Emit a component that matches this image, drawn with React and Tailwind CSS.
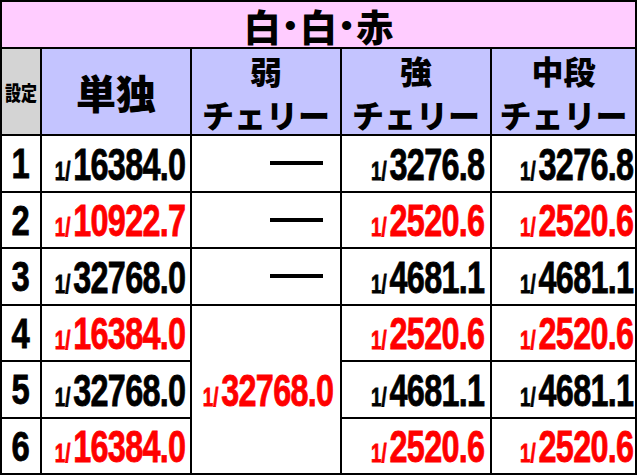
import React from "react";

const NUM_FONT = "font-['Liberation_Sans','Arial',sans-serif]";
const JP_FONT = "font-['Noto_Sans_CJK_JP','Noto_Sans',sans-serif]";

const rows = [
  { set: "1", single: ["16384.0", false], strong: ["3276.8", false], mid: ["3276.8", false] },
  { set: "2", single: ["10922.7", true], strong: ["2520.6", true], mid: ["2520.6", true] },
  { set: "3", single: ["32768.0", false], strong: ["4681.1", false], mid: ["4681.1", false] },
  { set: "4", single: ["16384.0", true], strong: ["2520.6", true], mid: ["2520.6", true] },
  { set: "5", single: ["32768.0", false], strong: ["4681.1", false], mid: ["4681.1", false] },
  { set: "6", single: ["16384.0", true], strong: ["2520.6", true], mid: ["2520.6", true] },
];

// "1/xxxx" — small prefix, large value, squeezed to a condensed look
function Value({ value, red }) {
  return (
    <div
      className={`flex items-baseline shrink-0 leading-none font-bold origin-right scale-x-[0.72] [-webkit-text-stroke:0.8px] ${NUM_FONT} ${red ? "text-[#ff0000]" : "text-black"}`}
    >
      <span className="text-[26px] mr-[4px]">1/</span>
      <span className="text-[45px] tracking-[-1px]">{value}</span>
    </div>
  );
}

function Prob({ value, red, pr = "pr-[5px]" }) {
  return (
    <div className={`bg-white flex items-center justify-end min-w-0 pt-[2px] ${pr}`}>
      <Value value={value} red={red} />
    </div>
  );
}

function Dash() {
  return (
    <div className="bg-white flex items-center justify-end pr-[17px]">
      <div className="w-[53px] h-[4px] bg-black" />
    </div>
  );
}

function Dot() {
  return <span className={`text-[32px] leading-none mx-[4px] -translate-y-[1px] ${NUM_FONT}`}>•</span>;
}

export default function App() {
  return (
    <div className="w-[640px] h-[475px] bg-white">
      <div className="w-[637px] h-[475px] bg-black p-[2px] grid gap-[2px] grid-cols-[38px_148px_148px_148px_1fr] grid-rows-[45px_85px_repeat(6,1fr)]">
        {/* title */}
        <div className={`col-span-5 bg-[#ffccff] flex items-center justify-center pt-[3px] text-[37px] font-black text-black leading-none ${JP_FONT}`}>
          白<Dot />白<Dot />赤
        </div>

        {/* header */}
        <div className={`bg-[#d4d4d4] flex items-center justify-center text-[16px] font-black leading-none ${JP_FONT}`}>
          <span className="scale-y-[1.3]">設定</span>
        </div>
        <div className={`bg-[#c4c4ff] flex items-center justify-center text-[40px] font-black leading-none ${JP_FONT}`}>
          単独
        </div>
        {["弱", "強", "中段"].map((h) => (
          <div
            key={h}
            className={`bg-[#c4c4ff] flex flex-col items-center justify-center gap-[12px] text-[32px] font-black leading-none ${JP_FONT}`}
          >
            <div>{h}</div>
            <div>チェリー</div>
          </div>
        ))}

        {/* body */}
        {rows.map((r, i) => (
          <React.Fragment key={r.set}>
            <div className="bg-white flex items-center justify-center pt-[2px]">
              <span className={`text-[42px] font-bold leading-none scale-x-[0.78] [-webkit-text-stroke:0.8px] ${NUM_FONT}`}>{r.set}</span>
            </div>
            <Prob value={r.single[0]} red={r.single[1]} />
            {i < 3 && <Dash />}
            {i === 3 && (
              <div className="row-span-3 bg-white flex items-center justify-end min-w-0 pt-[2px] pr-[7px]">
                <Value value="32768.0" red />
              </div>
            )}
            <Prob value={r.strong[0]} red={r.strong[1]} pr="pr-[6px]" />
            <Prob value={r.mid[0]} red={r.mid[1]} pr="pr-[2px]" />
          </React.Fragment>
        ))}
      </div>
    </div>
  );
}
